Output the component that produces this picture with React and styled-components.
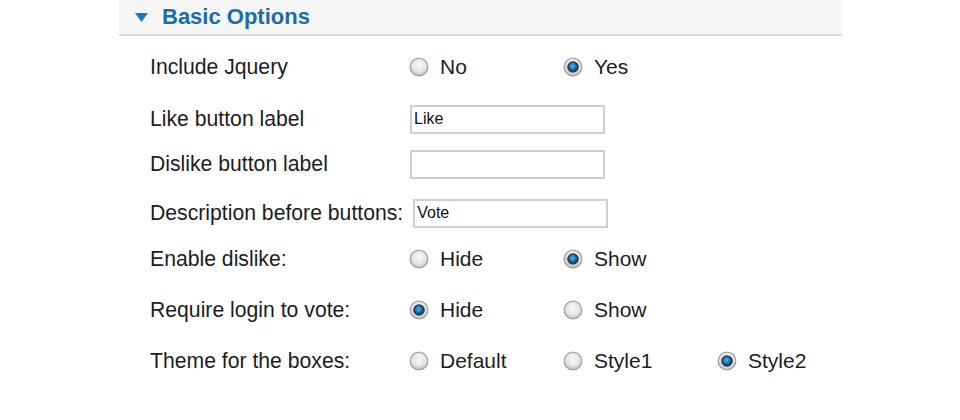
import React from "react";
import styled, { createGlobalStyle } from "styled-components";

const Global = createGlobalStyle`
  html, body { margin: 0; padding: 0; background: #ffffff; }
  body { font-family: "Liberation Sans", Arial, sans-serif; }
`;

const Panel = styled.div`
  margin-left: 119px;
  width: 723px;
`;

const Header = styled.div`
  height: 34px;
  background: #f6f6f6;
  border-bottom: 2px solid #dadada;
  display: flex;
  align-items: center;
  padding-left: 16px;
  gap: 14px;
`;

const Title = styled.h3`
  margin: 0;
  font-size: 22px;
  font-weight: bold;
  color: #1d6ba8;
  line-height: 34px;
`;

const Form = styled.div`
  padding: 0 0 0 31px;
  display: flex;
  flex-direction: column;
`;

const Row = styled.div`
  display: flex;
  align-items: center;
  height: 30px;
  margin-top: ${(p) => p.$gap}px;
`;

const Label = styled.label`
  min-width: 250px;
  margin-right: 12px;
  font-size: 21.2px;
  color: #1c1c24;
  white-space: nowrap;
`;

const TextInput = styled.input`
  box-sizing: border-box;
  width: 195px;
  height: 29px;
  margin-left: -2px;
  border: 2px solid #cfcfcf;
  padding: 0 2px;
  font-family: "Liberation Sans", Arial, sans-serif;
  font-size: 16px;
  color: #111;
  outline: none;
  background: #fff;
`;

const Options = styled.div`
  display: flex;
  margin-left: -3px;
`;

const Option = styled.span`
  width: 154px;
  display: flex;
  align-items: center;
  gap: 11px;
  font-size: 21px;
  color: #1c1c24;
`;

const RadioIcon = ({ checked }) => (
  <svg width="20" height="20" viewBox="0 0 20 20">
    <defs>
      <radialGradient id="rg" cx="50%" cy="40%" r="60%">
        <stop offset="0%" stopColor="#fafafa" />
        <stop offset="65%" stopColor="#e4e4e4" />
        <stop offset="100%" stopColor="#bdbdbd" />
      </radialGradient>
      <radialGradient id="rb" cx="45%" cy="40%" r="60%">
        <stop offset="0%" stopColor="#5bb8f0" />
        <stop offset="55%" stopColor="#1a7cc0" />
        <stop offset="100%" stopColor="#0d3f66" />
      </radialGradient>
    </defs>
    <circle cx="10" cy="10" r="8.8" fill="url(#rg)" stroke="#a4a4a4" strokeWidth="1.3" />
    {checked && (
      <>
        <circle cx="10" cy="10" r="5.8" fill="#2c3a48" />
        <circle cx="10" cy="10" r="4.4" fill="url(#rb)" />
      </>
    )}
  </svg>
);

const RadioGroup = ({ options, value }) => (
  <Options>
    {options.map((o) => (
      <Option key={o}>
        <RadioIcon checked={o === value} />
        {o}
      </Option>
    ))}
  </Options>
);

const rows = [
  { label: "Include Jquery", gap: 16, radio: ["No", "Yes"], value: "Yes" },
  { label: "Like button label", gap: 22, text: "Like" },
  { label: "Dislike button label", gap: 15, text: "" },
  { label: "Description before buttons:", gap: 19, text: "Vote" },
  { label: "Enable dislike:", gap: 16, radio: ["Hide", "Show"], value: "Show" },
  { label: "Require login to vote:", gap: 21, radio: ["Hide", "Show"], value: "Hide" },
  { label: "Theme for the boxes:", gap: 21, radio: ["Default", "Style1", "Style2"], value: "Style2" },
];

export default function App() {
  return (
    <>
      <Global />
      <Panel>
        <Header>
          <svg width="13" height="9" viewBox="0 0 13 9">
            <path d="M0 0 H13 L6.5 9 Z" fill="#1a78bd" />
          </svg>
          <Title>Basic Options</Title>
        </Header>
        <Form>
          {rows.map((r) => (
            <Row key={r.label} $gap={r.gap}>
              <Label>{r.label}</Label>
              {r.radio ? (
                <RadioGroup options={r.radio} value={r.value} />
              ) : (
                <TextInput defaultValue={r.text} />
              )}
            </Row>
          ))}
        </Form>
      </Panel>
    </>
  );
}
